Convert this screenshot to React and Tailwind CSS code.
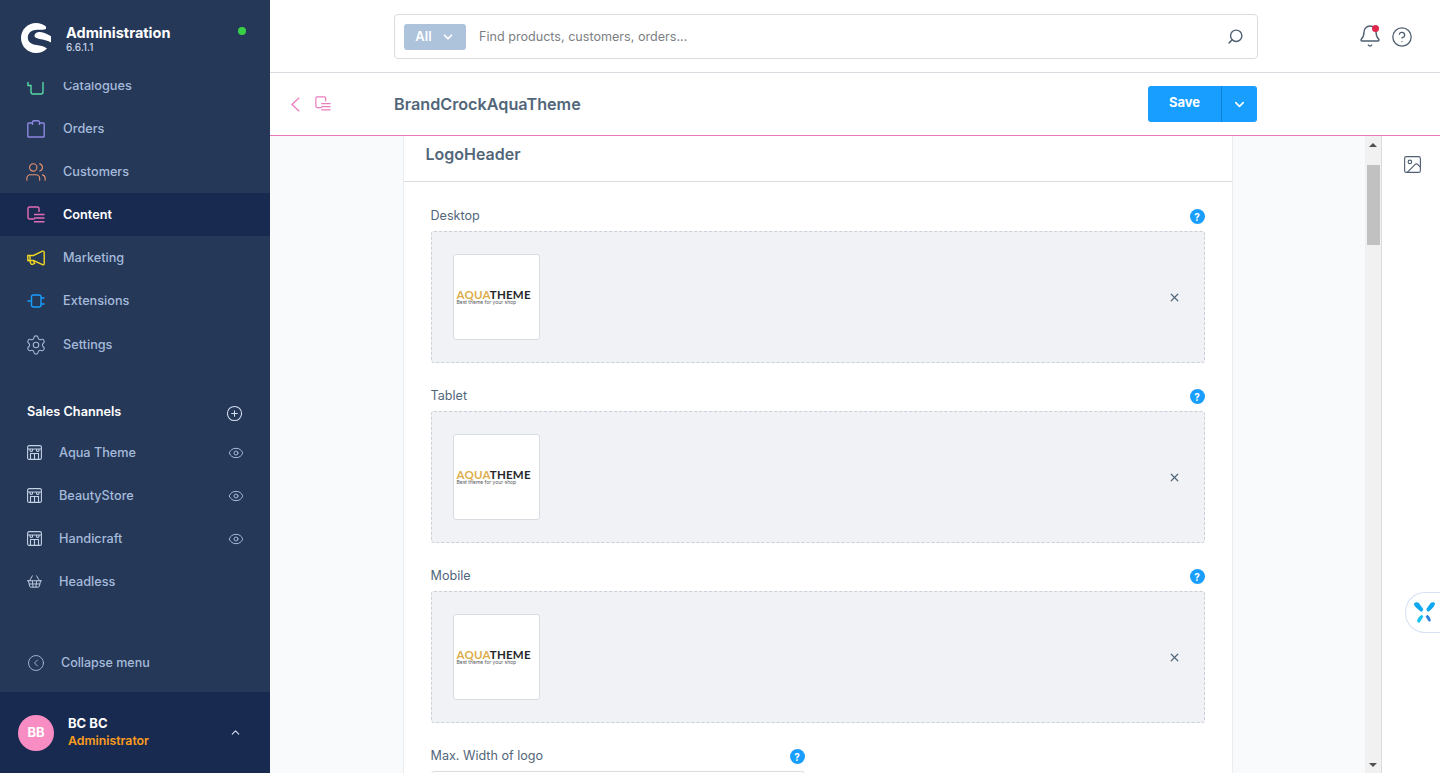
import React from "react";
import { Users, Settings, Eye, CirclePlus, CircleChevronLeft, ChevronUp, ChevronDown, Search, Bell, CircleHelp, Image, X, ShoppingBasket } from "lucide-react";

const ContentIcon = ({ className }) => (
  <svg viewBox="0 0 18 18" fill="none" stroke="currentColor" strokeWidth="1.4" className={className}>
    <path d="M7.500 13H2.500A1.500 1.500 0 0 1 1 11.500v-9A1.500 1.500 0 0 1 2.500 1h8A1.500 1.500 0 0 1 12 2.500V6" />
    <path d="M7 8.500h10.500M7 12h10.500M7 15.700h10.500" />
  </svg>
);
const BagIcon = ({ className }) => (
  <svg viewBox="0 0 18 18" fill="none" stroke="currentColor" strokeWidth="1.4" className={className}>
    <path d="M5.500 3H1.600a.8.8 0 0 0-.8.8v12.400c0 .5.4.8.8.8h14.800c.5 0 .8-.3.8-.8V3.800a.8.8 0 0 0-.8-.8h-3.900" />
    <path d="M5.500 5V2.300A1.500 1.500 0 0 1 7 .8h4a1.500 1.500 0 0 1 1.500 1.500V5" />
  </svg>
);
const CatalogIcon = ({ className }) => (
  <svg viewBox="0 0 18 18" fill="none" stroke="currentColor" strokeWidth="1.4" className={className}>
    <path d="M1 5v3.500h3V15a2 2 0 0 0 2 2h8a2 2 0 0 0 2-2V5" />
    <path d="M5 1h8" />
  </svg>
);
const MegaphoneIcon = ({ className }) => (
  <svg viewBox="0 0 18 18" fill="none" stroke="currentColor" strokeWidth="1.400" className={className}>
    <path d="M.8 6.500h5.700L15.500 2.200c.8-.3 1.700.1 1.700 1v11.600c0 .8-.9 1.300-1.700.9L6.500 11.500H.8z" />
    <path d="M2.500 11.500l1.600 3.300c.3.500.8.700 1.300.5l2.200-1-1.300-2.800" />
    <path d="M3 6.500v5" />
  </svg>
);
const PlugIcon = ({ className }) => (
  <svg viewBox="0 0 18 18" fill="none" stroke="currentColor" strokeWidth="1.400" className={className}>
    <rect x="4.500" y="3" width="9.500" height="12" rx="2" />
    <path d="M.5 9h4M14 6h3.500M14 12h3.500" />
  </svg>
);
const StoreIcon = ({ className }) => (
  <svg viewBox="0 0 15 15" fill="none" stroke="currentColor" strokeWidth="1.100" className={className}>
    <rect x=".6" y=".6" width="13.800" height="13.800" rx="1.500" />
    <path d="M.6 4h13.800M3 4v1.500a1.300 1.300 0 0 0 2.500 0V4M9.500 4v1.500a1.300 1.300 0 0 0 2.500 0V4" />
    <path d="M3.500 14.400V8.500h8v5.900M7.500 8.500v5.900" />
  </svg>
);

const Logo = () => (
  <svg viewBox="0 0 30 30" className="h-[30px] w-[30px] shrink-0">
    <path fill="#fff" d="M25 3.500C22 1.200 19 0 15 0 6.700 0 0 6.700 0 15s6.700 15 15 15c4.300 0 8-1.500 11-4.500-3-2.200-7-3-10.500-3.500C10.500 21.300 6.800 19 6.800 14.500 6.800 9.800 11 6.800 16 6.800c3 0 6.500.1 9-.8z" />
    <path fill="#fff" d="M13.500 12.800c0-2.300 2.500-3.800 5.500-3.800 4 0 7.500 2.300 11 4.300V19.500c-3-1.800-6.500-2.700-10-3.300-3.500-.6-6.500-1.300-6.500-3.400z" />
  </svg>
);

const navItems = [
  ["Orders", BagIcon, "h-[18px] w-[18px] text-[#8b87e0]", false, ""],
  ["Customers", Users, "h-[22px] w-[22px] text-[#e8926f]", false, ""],
  ["Content", ContentIcon, "h-[18px] w-[18px] text-[#e46bb6]", true, ""],
  ["Marketing", MegaphoneIcon, "h-[18px] w-[18px] text-[#f0d623]", false, ""],
  ["Extensions", PlugIcon, "h-[18px] w-[18px] text-[#189eff]", false, ""],
  ["Settings", Settings, "h-[22px] w-[22px] text-[#a5b8d3]", false, "pt-[2px]"],
];

function NavItem({ label, Icon, color, active, extra }) {
  return (
    <div className={`flex h-[43px] items-center pl-[27px] ${extra} ${active ? "bg-[#192a50]" : ""}`}>
      <span className="flex h-[18px] w-[18px] shrink-0 items-center justify-center">
        <Icon className={`shrink-0 ${color}`} strokeWidth={1.200} />
      </span>
      <span className={`ml-[18px] text-[12.7px] ${active ? "font-semibold text-white" : "font-medium text-[#a5bbdb]"}`}>{label}</span>
    </div>
  );
}

function Channel({ label, Icon, size, eye }) {
  return (
    <div className="flex h-[43px] items-center pl-[27px] pr-[26px]">
      <span className="flex h-[15px] w-[15px] shrink-0 items-center justify-center">
        <Icon className={`shrink-0 text-[#c3d1e5] ${size}`} strokeWidth={1.300} />
      </span>
      <span className="ml-[17px] flex-1 text-[12.7px] font-medium text-[#a5bbdb]">{label}</span>
      {eye && <Eye className="h-[16px] w-[16px] text-[#a5bbdb]" strokeWidth={1.500} />}
    </div>
  );
}

function Sidebar() {
  return (
    <aside className="flex h-full w-[270px] shrink-0 flex-col bg-[#263858]">
      <div className="flex h-[82px] shrink-0 pl-[21px] pr-[24px] pt-[23px]">
        <Logo />
        <div className="ml-[15px] mt-[1px] flex-1">
          <div className="text-[14.500px] font-bold leading-[18px] text-white">Administration</div>
          <div className="text-[10px] font-medium leading-[10px] text-[#c3d1e5]">6.6.1.1</div>
        </div>
        <span className="mt-[4px] h-[8px] w-[8px] rounded-full bg-[#37d046]" />
      </div>
      <div className="h-[25px] shrink-0 overflow-hidden">
        <div className="-mt-[18px] flex h-[43px] items-center pl-[27px]">
          <CatalogIcon className="h-[18px] w-[18px] text-[#57d9a3]" />
          <span className="ml-[18px] text-[12.7px] font-medium text-[#a5bbdb]">Catalogues</span>
        </div>
      </div>
      <nav>
        {navItems.map(([label, Icon, color, active, extra]) => (
          <NavItem key={label} label={label} Icon={Icon} color={color} active={active} extra={extra} />
        ))}
      </nav>
      <div className="mt-[34px] flex h-[26px] items-center pl-[27px] pr-[27px]">
        <span className="flex-1 text-[12.7px] font-semibold text-white">Sales Channels</span>
        <CirclePlus className="mt-[2px] h-[17px] w-[17px] text-[#d5e0ef]" strokeWidth={1.500} />
      </div>
      <div className="mt-[6px]">
        <Channel label="Aqua Theme" Icon={StoreIcon} size="h-[15px] w-[15px]" eye />
        <Channel label="BeautyStore" Icon={StoreIcon} size="h-[15px] w-[15px]" eye />
        <Channel label="Handicraft" Icon={StoreIcon} size="h-[15px] w-[15px]" eye />
        <Channel label="Headless" Icon={ShoppingBasket} size="h-[17px] w-[17px]" />
      </div>
      <div className="mt-[47px] flex h-[26px] items-center pl-[27px]">
        <CircleChevronLeft className="h-[18px] w-[18px] text-[#a5bbdb]" strokeWidth={1.200} />
        <span className="ml-[16px] text-[12.500px] font-medium text-[#a5bbdb]">Collapse menu</span>
      </div>
      <div className="mt-auto flex h-[81px] items-center bg-[#192a50] pl-[18px] pr-[28px]">
        <div className="flex h-[36px] w-[36px] items-center justify-center rounded-full bg-[#f88dc3] text-[13px] font-bold text-white">BB</div>
        <div className="-mt-[2px] ml-[14px] flex-1">
          <div className="text-[13px] font-bold leading-[17px] text-white">BC BC</div>
          <div className="text-[12.300px] font-semibold leading-[17px] text-[#fb9d1f]">Administrator</div>
        </div>
        <ChevronUp className="h-[13px] w-[13px] text-[#d5e0ef]" strokeWidth={2} />
      </div>
    </aside>
  );
}

function TopBar() {
  return (
    <div className="flex h-[73px] shrink-0 items-start border-b border-[#d9dde2] bg-white pl-[124px]">
      <div className="mt-[14px] flex h-[45px] w-[864px] items-center rounded-[4px] border border-[#d9dde2] bg-white pl-[9px] pr-[13px]">
        <div className="flex h-[26px] w-[62px] items-center justify-center gap-[9px] rounded-[3px] bg-[#adc3db] text-[13px] font-semibold text-white">
          <span>All</span>
          <ChevronDown className="h-[14px] w-[14px]" strokeWidth={3} />
        </div>
        <span className="ml-[13px] mt-[2px] flex-1 text-[12.600px] text-[#7c7f83]">Find products, customers, orders...</span>
        <Search className="h-[17px] w-[17px] -scale-x-100 text-[#4f5e71]" strokeWidth={2} />
      </div>
      <div className="ml-[100px] mt-[24px] flex items-start gap-[9px]">
        <div className="relative">
          <Bell className="h-[24px] w-[24px] text-[#4f5e71]" strokeWidth={1.400} />
          <span className="absolute right-[3px] top-[1px] h-[7px] w-[7px] rounded-full bg-[#de294c]" />
        </div>
        <CircleHelp className="mt-[2px] h-[22px] w-[22px] text-[#4f5e71]" strokeWidth={1.400} />
      </div>
    </div>
  );
}

function SmartBar() {
  return (
    <div className="flex h-[62px] shrink-0 items-center bg-white pr-[183px]">
      <svg viewBox="0 0 9 15" fill="none" stroke="currentColor" strokeWidth="1.300" className="ml-[21px] h-[15px] w-[9px] text-[#ea7dc0]">
        <path d="M8.200.7L1 7.500l7.200 6.800" />
      </svg>
      <ContentIcon className="ml-[15px] h-[16px] w-[16px] text-[#ea7dc0]" />
      <span className="ml-[63px] text-[16.200px] font-semibold text-[#52667a]">BrandCrockAquaTheme</span>
      <div className="ml-auto flex h-[36px] w-[109px] overflow-hidden rounded-[3px] bg-[#189eff] text-white">
        <div className="flex w-[74px] items-center justify-center border-r border-[#0b7fd6] pb-[2px] text-[13px] font-bold">Save</div>
        <div className="flex flex-1 items-center justify-center">
          <ChevronDown className="h-[15px] w-[15px]" strokeWidth={2.500} />
        </div>
      </div>
    </div>
  );
}

const HelpDot = () => (
  <span className="mt-[1px] flex h-[15px] w-[15px] items-center justify-center rounded-full bg-[#189eff] text-[10px] font-bold leading-none text-white">?</span>
);

function Field({ label }) {
  return (
    <div className="mb-[24px]">
      <div className="flex h-[24px] items-start justify-between pt-[1px]">
        <span className="text-[12.600px] leading-[16px] text-[#52667a]">{label}</span>
        <HelpDot />
      </div>
      <div className="flex h-[132px] items-center rounded-[3px] border border-dashed border-[#c9d0d8] bg-[#f0f2f5] pl-[21px] pr-[23px]">
        <div className="flex h-[86px] w-[87px] flex-col justify-center rounded-[3px] border border-[#d9dde2] bg-white pl-[3px]">
          <div className="text-[11.500px] font-bold leading-[10px] tracking-[0.2px]" style={{ fontFamily: "Lato, sans-serif" }}>
            <span className="text-[#dcae4e]">AQUA</span><span className="text-[#27272a]">THEME</span>
          </div>
          <div className="whitespace-nowrap text-[5px] leading-[5px] text-[#55585c]">Best theme for your shop</div>
        </div>
        <X className="ml-auto h-[13px] w-[13px] text-[#52667a]" strokeWidth={2.200} />
      </div>
    </div>
  );
}

function Scrollbar() {
  return (
    <div className="flex h-full w-[17px] shrink-0 flex-col items-center border-r border-[#d9dde2] bg-[#f1f1f1]">
      <span className="mt-[7px] h-0 w-0 border-x-[4px] border-b-[4px] border-x-transparent border-b-[#505050]" />
      <span className="mt-[18px] h-[80px] w-[13px] bg-[#c1c1c1]" />
      <span className="mb-[6px] mt-auto h-0 w-0 border-x-[4px] border-t-[4px] border-x-transparent border-t-[#505050]" />
    </div>
  );
}

function Card() {
  return (
    <div className="flex h-full flex-1 justify-center overflow-hidden bg-[#f8fafc]">
      <div className="h-full w-[830px] border-x border-[#e9edf0] bg-white">
        <div className="h-[46px] border-b border-[#d9dde2] pl-[22px] pt-[8px] text-[16px] font-semibold leading-[20px] text-[#52667a]">LogoHeader</div>
        <div className="px-[27px] pt-[25px]">
          <Field label="Desktop" />
          <Field label="Tablet" />
          <Field label="Mobile" />
          <div className="w-[374px]">
            <div className="flex h-[24px] items-start justify-between pt-[1px]">
              <span className="text-[12.600px] leading-[16px] text-[#52667a]">Max. Width of logo</span>
              <HelpDot />
            </div>
            <div className="h-[40px] rounded-t-[3px] border border-[#d9dde2] bg-white" />
          </div>
        </div>
      </div>
    </div>
  );
}

function RightRail() {
  return (
    <div className="relative flex w-[58px] shrink-0 justify-center bg-white pl-[2px] pt-[18px]">
      <Image className="h-[21px] w-[21px] text-[#4f5e71]" strokeWidth={1.300} />
      <div className="absolute left-[23px] top-[456px] flex h-[41px] w-[35px] items-center rounded-l-[20px] border border-r-0 border-[#d4e2f4] bg-white pl-[5px]">
        <svg viewBox="0 0 24 24" className="h-[27px] w-[27px] shrink-0">
          <path d="M2.500 4.500c1-1.800 3-2 4.500-1l4 5.500-1.500 2.500C7 10 3.500 7.500 2.500 4.500z" fill="#0fa8f0" />
          <path d="M21.500 4c-1-1.500-3-1.500-4-.5L13.500 9l1.500 2.500c2.500-1.500 5.500-4 6.500-7.500z" fill="#0fa8f0" />
          <path d="M9.500 14l1.500 1.500L8 20.500c-1 1-2.500.5-2.500-1 0-2 2-4.500 4-5.500z" fill="#19c3ee" />
          <path d="M14.500 14l-1.500 1.500 2.500 4c.8 1 2.200.5 2-.8-.2-1.800-1.500-3.700-3-4.700z" fill="#2b7fe0" />
        </svg>
      </div>
    </div>
  );
}

export default function App() {
  return (
    <div className="flex h-[773px] w-[1440px] overflow-hidden bg-white" style={{ fontFamily: "Inter, sans-serif" }}>
      <Sidebar />
      <main className="flex min-w-0 flex-1 flex-col">
        <TopBar />
        <SmartBar />
        <div className="flex min-h-0 flex-1 border-t border-t-[#e579ba]">
          <Card />
          <Scrollbar />
          <RightRail />
        </div>
      </main>
    </div>
  );
}
